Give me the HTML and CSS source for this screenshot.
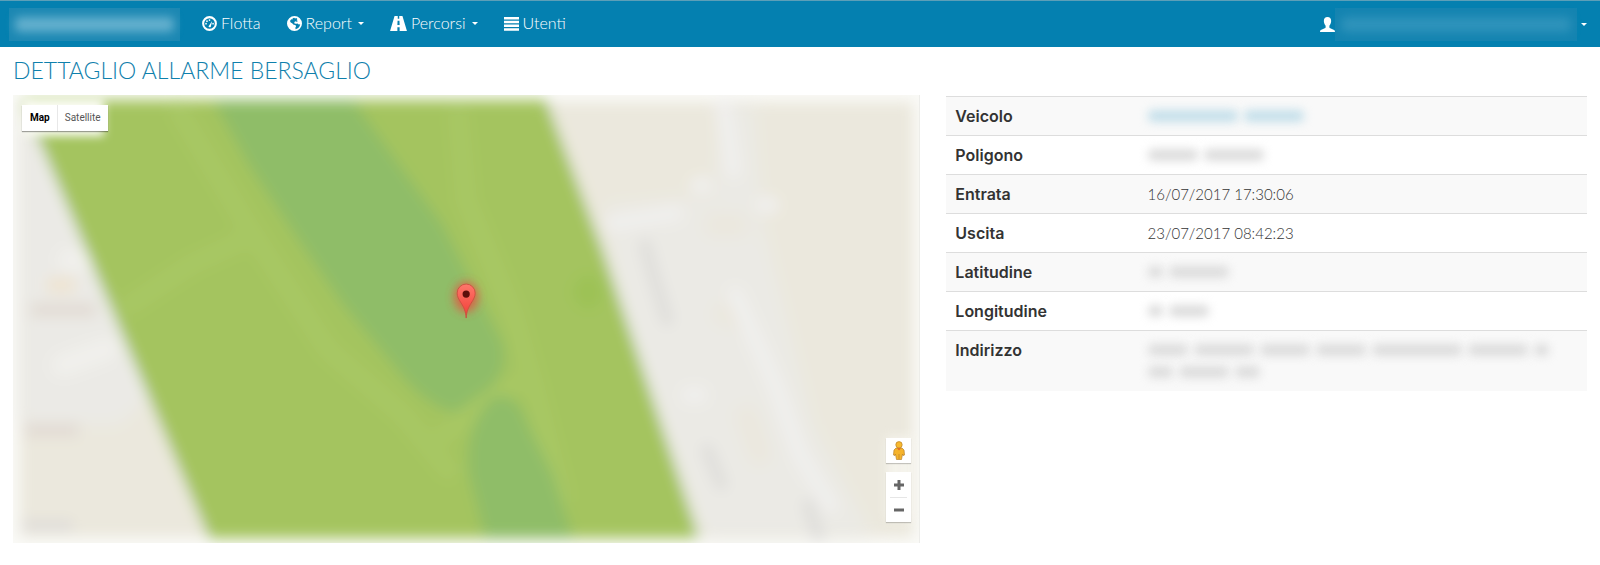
FILE: index.html
```html
<!DOCTYPE html>
<html lang="it">
<head>
<meta charset="utf-8">
<meta name="viewport" content="width=device-width, initial-scale=1">
<title>Dettaglio allarme bersaglio</title>
<link rel="stylesheet" href="styles.css">
</head>
<body>
<header class="navbar">
  <a class="brand" href="#" aria-label="Home"><span class="smudge smudge-brand"></span></a>
  <nav class="menu">
    <a class="menu-item" href="#">
      <svg class="icon" viewBox="0 0 16 16" aria-hidden="true"><circle cx="8" cy="8" r="6.8" fill="none" stroke="currentColor" stroke-width="2.2"/><path d="M7 10.8 10.8 5.2 9.4 11.4a1.3 1.3 0 0 1-2.4-.6Z"/><circle cx="4.3" cy="8.2" r=".9"/><circle cx="5.3" cy="5.500" r=".9"/><circle cx="8" cy="4.3" r=".9"/><circle cx="11.8" cy="8.2" r=".9"/></svg>
      <span>Flotta</span>
    </a>
    <button class="menu-item" type="button">
      <svg class="icon" viewBox="0 0 16 16" aria-hidden="true"><path fill-rule="evenodd" d="M8 0a8 8 0 1 0 0 16A8 8 0 0 0 8 0ZM7.6 1.8l1 .8 1.4-.4 1 1-.8 1.3 1.1.5-.5 1.3-1.6-.6-1.4.8.2 1.4 1.8.3 1.5-.3 1.2 1.2 1.6-.3A6.3 6.3 0 0 1 9.2 14l-.3-1.6.8-1.4-.8-1.5-1.8-.2-1.6-1.6L4 7 3.2 5.3 4.5 3.5l1.3.2.3-1.3Z"/></svg>
      <span>Report</span><span class="caret"></span>
    </button>
    <button class="menu-item" type="button">
      <svg class="icon icon-road" viewBox="0 0 18 16" aria-hidden="true"><path fill-rule="evenodd" d="M4.8 0h3.4v3h1.6V0h3.4L18 16h-7.8v-4H7.8v4H0ZM8 5l-.2 4.5h2.4L10 5Z"/></svg>
      <span>Percorsi</span><span class="caret"></span>
    </button>
    <a class="menu-item" href="#">
      <svg class="icon" viewBox="0 0 16 16" aria-hidden="true"><path d="M0 1h16v2.600H0zM0 5h16v2.600H0zM0 9h16v2.600H0zM0 13h16v2.600H0z"/></svg>
      <span>Utenti</span>
    </a>
  </nav>
  <button class="account" type="button" aria-label="Account">
    <svg class="icon" viewBox="0 0 16 16" aria-hidden="true"><path d="M8 0c2.500 0 3.900 1.600 3.900 4.300 0 1.900-.8 3.800-1.900 4.900v1.600c0 .6.400.9 1 1.200l3.500 1.500c1 .4 1.500 1 1.500 2.500H0c0-1.500.5-2.100 1.500-2.500L5 12c.6-.3 1-.6 1-1.200V9.200C4.900 8.100 4.100 6.200 4.100 4.300 4.100 1.600 5.500 0 8 0Z"/></svg>
    <span class="smudge smudge-account"></span>
    <span class="caret"></span>
  </button>
</header>

<main>
  <h1>DETTAGLIO ALLARME BERSAGLIO</h1>
  <div class="row">
    <section class="col">
      <div class="map">
        <svg class="map-canvas" viewBox="0 0 907 448" preserveAspectRatio="xMidYMid slice" aria-hidden="true">
          <defs>
            <filter id="soft" filterUnits="userSpaceOnUse" x="-40" y="-40" width="987" height="528"><feGaussianBlur stdDeviation="7"/></filter>
            <filter id="softer" filterUnits="userSpaceOnUse" x="-40" y="-40" width="987" height="528"><feGaussianBlur stdDeviation="5"/></filter>
            <filter id="glow" x="-100%" y="-100%" width="300%" height="300%"><feGaussianBlur stdDeviation="5"/></filter>
            <linearGradient id="pin" x1="0" y1="0" x2="0" y2="1"><stop offset="0" stop-color="#ff776b"/><stop offset="1" stop-color="#f03c35"/></linearGradient>
          </defs>
          <rect width="907" height="448" fill="#fafaf7"/>
          <g filter="url(#soft)">
            <rect x="7" y="7" width="893" height="435" fill="#ebe8dd"/>
            <g filter="url(#soft)">
              <path d="M7 20h20l120 270-40 40H7Z" fill="#ebeae6"/>
              <path d="M590 110 700 100l10-90h30l10 120 50 200 60 112H690L610 230Z" fill="#ebeae5"/>
              <path d="M690 130h45M700 215l30 10M730 310l20 60" stroke="#ebe7de" stroke-width="24"/>
            </g>
            <g fill="none" stroke="#f0efed" stroke-width="16" stroke-linecap="round">
              <path d="M710 10l10 65M600 128l62-10M722 200l40 90 25 70 30 50M685 90h6M750 110h8M676 300h10"/>
              <path d="M50 270l44-16M56 165h14" stroke="#f1f0ec" stroke-width="22"/>
            </g>
            <g fill="none" stroke="#dfdedb" stroke-width="13" stroke-linecap="round"><path d="M632 150l8 30 14 45M694 355l14 34M795 410l10 30"/></g>
            <path d="M18 215h65M12 335h54" stroke="#e2dbd4" stroke-width="14"/>
            <path d="M34 190h28" stroke="#eee4d2" stroke-width="16"/>
            <path d="M10 430h50" stroke="#dedbd9" stroke-width="10"/>
            <path d="M9 5H533L590 156 686 443H196Z" fill="#a4c45e"/>
            <g fill="none" stroke="#a7c763" stroke-width="22" stroke-linecap="round">
              <path d="M165 15 237 135 315 255 390 320 435 375M445 20 453 105 500 220 520 290 548 400M117 210 177 170 237 142M500 290 430 340"/>
            </g>
            <ellipse cx="575" cy="197" rx="16" ry="18" fill="#9dc257"/>
            <path d="M200 5H340L388 72 430 130 464 198 490 248Q497 280 470 298L442 318Q410 310 380 270L330 210 282 140 237 72Z" fill="#8fbd68"/>
            <path d="M480 302Q505 295 515 330L540 380 560 443H472L456 380Q450 330 480 302Z" fill="#8fbd68"/>
          </g>
          <path d="M9 3h82v38H9Z" fill="#fbfcf4" filter="url(#softer)"/>
          <path d="M873 341h26v84h-26Z" fill="#fbfaf5" filter="url(#softer)" opacity=".6"/>
          <path d="M906.500 0v448" stroke="#e8e8e4"/>
          <ellipse cx="453" cy="202" rx="12" ry="15" fill="#f0463c" opacity=".75" filter="url(#glow)"/>
          <path d="M453 223c-.5-7-2.500-11-5-15-2.500-4-4-6.500-4-10a9 9 0 0 1 18 0c0 3.500-1.500 6-4 10-2.500 4-4.500 8-5 15Z" fill="url(#pin)" stroke="#c94a3e" stroke-width=".8"/>
          <circle cx="453" cy="199" r="3.600" fill="#5d0f0b"/>
        </svg>
        <div class="map-types">
          <button class="map-type map-type-active" type="button">Map</button>
          <button class="map-type" type="button">Satellite</button>
        </div>
        <div class="map-tools">
          <button class="tool" type="button" aria-label="Street View">
            <svg class="pegman" viewBox="0 0 12 19" aria-hidden="true"><path d="M3 7h6l2 2 .5 5-1.500.5-.5-1.500L8.500 18.500h-5L2.500 13 2 14.500.5 14 1 9Z" fill="#f5b32b" stroke="#b9812a" stroke-width=".7"/><circle cx="6" cy="3.800" r="3.200" fill="#f8b92e" stroke="#b9812a" stroke-width=".7"/><path d="M4 7.200 6 9.500 8 7.200Z" fill="#e0662a"/><path d="M6 13v5" stroke="#b9812a" stroke-width=".7"/></svg>
          </button>
          <div class="zoom">
            <button class="tool" type="button" aria-label="Zoom in"><svg class="sign" viewBox="0 0 10 10" aria-hidden="true"><path d="M3.500 0h3v3.500H10v3H6.500V10h-3V6.500H0v-3h3.500z"/></svg></button>
            <button class="tool" type="button" aria-label="Zoom out"><svg class="sign" viewBox="0 0 10 10" aria-hidden="true"><path d="M0 3.500h10v3H0z"/></svg></button>
          </div>
        </div>
      </div>
    </section>
    <section class="col">
      <table class="details">
        <tbody>
          <tr><th scope="row">Veicolo</th><td><span class="blot blot-link w-90"></span><span class="blot blot-link w-60"></span></td></tr>
          <tr><th scope="row">Poligono</th><td><span class="blot w-50"></span><span class="blot w-60"></span></td></tr>
          <tr><th scope="row">Entrata</th><td>16/07/2017 17:30:06</td></tr>
          <tr><th scope="row">Uscita</th><td>23/07/2017 08:42:23</td></tr>
          <tr><th scope="row">Latitudine</th><td><span class="blot w-15"></span><span class="blot w-60"></span></td></tr>
          <tr><th scope="row">Longitudine</th><td><span class="blot w-15"></span><span class="blot w-40"></span></td></tr>
          <tr><th scope="row">Indirizzo</th><td><span class="blot w-40"></span><span class="blot w-60"></span><span class="blot w-50"></span><span class="blot w-50"></span><span class="blot w-90"></span><span class="blot w-60"></span><span class="blot w-15"></span><br><span class="blot w-25"></span><span class="blot w-50"></span><span class="blot w-25"></span></td></tr>
        </tbody>
      </table>
    </section>
  </div>
</main>
</body>
</html>
```

FILE: styles.css
```css
* { box-sizing: border-box; }

body {
  margin: 0;
  background: #fff;
  color: #333;
  font-family: Lato, "Open Sans", sans-serif;
  font-size: 15px;
  font-weight: 300;
  line-height: 22px;
}

button {
  margin: 0;
  padding: 0;
  border: 0;
  background: none;
  color: inherit;
  font: inherit;
  cursor: pointer;
}

a { color: inherit; text-decoration: none; }

/* Navigation bar */
.navbar {
  display: flex;
  align-items: center;
  min-height: 47px;
  padding: 0 13px 0 9px;
  border-top: 1px solid #5c9fb8;
  background: #0480b0;
  color: #fff;
  font-size: 16px;
}

.smudge {
  display: block;
  height: 33px;
  padding: 9px 6px;
  background: #1c88b3;
}

.smudge::before {
  content: "";
  display: block;
  height: 100%;
  border-radius: 5px;
  background: #64b0ce;
  filter: blur(5px);
}

.smudge-brand { width: 171px; }

.smudge-account { width: 242px; background: #1484b1; }

.smudge-account::before { background: #2f93bb; }

.brand { margin-right: 9px; }

.menu { display: flex; }

.menu-item {
  display: flex;
  align-items: center;
  gap: 4px;
  padding: 11px 13px 13px;
}

.icon {
  display: block;
  width: 15px;
  height: 15px;
  fill: currentColor;
}

.icon-road { width: 17px; }

.caret {
  margin-left: 2px;
  border: 3px solid transparent;
  border-top-color: #fff;
  border-bottom: 0;
}

.account {
  display: flex;
  align-items: center;
  margin-left: auto;
}

.account .caret { margin-left: 4px; }

/* Page */
h1 {
  margin: 0;
  padding: 8px 13px 10px;
  color: #0f80ac;
  font-size: 23px;
  font-weight: 300;
  line-height: 30px;
}

.row {
  display: grid;
  grid-template-columns: 7fr 5fr;
  align-items: start;
}

.col { min-width: 0; padding: 0 13px; }

/* Map */
.map {
  position: relative;
  aspect-ratio: 907 / 448;
  overflow: hidden;
}

.map-canvas { display: block; width: 100%; height: 100%; }

.map-types {
  position: absolute;
  top: 10px;
  left: 9px;
  display: flex;
  background: #fff;
  box-shadow: 0 1px 1px rgba(0, 0, 0, 0.35);
}

.map-type {
  padding: 2px 7px;
  color: #565656;
  font-family: Roboto, sans-serif;
  font-size: 10px;
  font-weight: 400;
}

.map-type-active {
  padding-left: 8px;
  border-right: 1px solid #e8e8e8;
  color: #000;
  font-weight: 700;
}

.map-tools {
  position: absolute;
  right: 9px;
  bottom: 21px;
  display: grid;
  gap: 9px;
}

.tool {
  display: grid;
  place-items: center;
  width: 25px;
  height: 25px;
  background: #fff;
  box-shadow: 0 1px 1px rgba(0, 0, 0, 0.2);
}

.zoom {
  background: #fff;
  box-shadow: 0 1px 1px rgba(0, 0, 0, 0.2);
}

.zoom .tool { box-shadow: none; }

.zoom .tool + .tool {
  background: linear-gradient(#e6e6e6, #e6e6e6) center top / 17px 1px no-repeat;
}

.pegman { width: 12px; height: 19px; }

.sign { width: 10px; height: 10px; fill: #666; }

/* Details */
.details {
  width: 100%;
  margin-top: 1px;
  border-collapse: collapse;
  table-layout: fixed;
}

.details th,
.details td {
  padding: 8px 9px;
  border-top: 1px solid #ddd;
  text-align: left;
  vertical-align: top;
}

.details th {
  width: 30%;
  font-family: Inter, sans-serif;
  font-size: 16px;
  font-weight: 600;
}

.details tr:nth-child(odd) { background: #f9f9f9; }

.blot {
  display: inline-block;
  height: 12px;
  margin-right: 6px;
  border-radius: 5px;
  background: #dcdcdc;
  filter: blur(5px);
}

.blot-link { background: #c4dfea; }

.w-15 { width: 15px; }
.w-25 { width: 25px; }
.w-40 { width: 40px; }
.w-50 { width: 50px; }
.w-60 { width: 60px; }
.w-90 { width: 90px; }
```
